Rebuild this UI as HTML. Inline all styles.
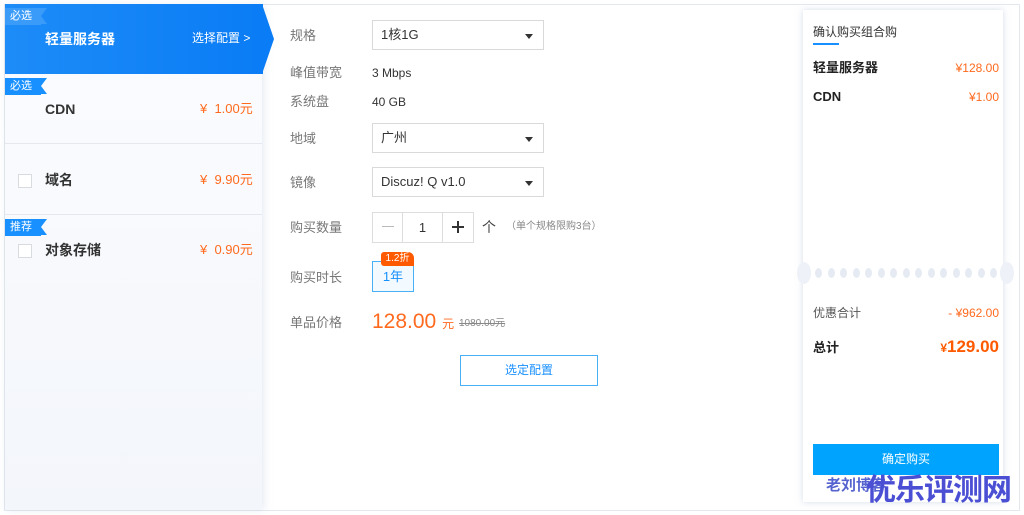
<!DOCTYPE html>
<html><head><meta charset="utf-8"><style>
*{margin:0;padding:0;box-sizing:border-box}
body{width:1024px;height:515px;background:#fff;font-family:"Liberation Sans","Noto Sans CJK SC",sans-serif;position:relative;overflow:hidden;color:#333;line-height:1.2}
.abs{position:absolute}
.outer{left:4px;top:4px;width:1016px;height:507px;border:1px solid #e3e8ef}
.left{left:5px;top:5px;width:257px;height:505px;background:linear-gradient(#fbfcfe,#f3f6fb);box-shadow:2px 0 8px rgba(180,195,215,.35)}
.tab{left:5px;top:4px;width:258px;height:70px;background:linear-gradient(90deg,#1d8cf8,#0a7cf5)}
.tri{left:262px;top:4px;width:0;height:0;border-top:35px solid transparent;border-bottom:35px solid transparent;border-left:12px solid #0a7cf5}
.badge{height:17px;line-height:17px;font-size:11px;color:#fff;background:#1890ff;padding-left:5px;width:36px}
.badge:after{content:"";position:absolute;right:-6px;top:0;border-top:8.5px solid #1890ff;border-bottom:8.5px solid #1890ff;border-right:6px solid transparent}
.b0{background:#3a9cf8}.b0:after{border-top-color:#3a9cf8;border-bottom-color:#3a9cf8}
.row{left:5px;width:257px;height:70px;border-bottom:1px solid #e4e8ee}
.nm{font-size:14px;font-weight:bold;color:#333}
.pr{font-size:13px;color:#ff6a1e}
.cb{width:14px;height:14px;border:1px solid #d8dbe0;background:#fff}
.lbl{left:290px;font-size:13px;color:#777}
.sel{left:372px;width:172px;height:30px;border:1px solid #d9d9d9;font-size:13px;color:#333;padding:6px 8px}
.sel:after{content:"";position:absolute;right:10px;top:13px;border-left:4px solid transparent;border-right:4px solid transparent;border-top:5px solid #333}
.val{left:372px;font-size:12px;color:#333}
.card{left:803px;top:10px;width:200px;height:492px;background:#fff;box-shadow:0 0 6px rgba(170,185,210,.5)}
.dot{width:7px;height:10px;border-radius:50%;background:#e6ebf3;top:268px}
</style></head><body>
<div class="abs outer"></div>
<div class="abs left"></div>
<div class="abs tab"></div>
<div class="abs tri"></div>
<div class="abs badge b0" style="left:5px;top:8px">必选</div>
<div class="abs" style="left:45px;top:31px;font-size:14px;font-weight:bold;color:#fff">轻量服务器</div>
<div class="abs" style="left:192px;top:31px;font-size:12px;color:#fff">选择配置 &gt;</div>

<div class="abs row" style="top:74px"></div>
<div class="abs badge" style="left:5px;top:78px">必选</div>
<div class="abs nm" style="left:45px;top:101px">CDN</div>
<div class="abs pr" style="left:200px;top:101px">¥&nbsp; 1.00元</div>

<div class="abs row" style="top:145px"></div>
<div class="abs cb" style="left:18px;top:174px"></div>
<div class="abs nm" style="left:45px;top:172px">域名</div>
<div class="abs pr" style="left:200px;top:172px">¥&nbsp; 9.90元</div>

<div class="abs row" style="top:215px;border:none"></div>
<div class="abs badge" style="left:5px;top:219px">推荐</div>
<div class="abs cb" style="left:18px;top:244px"></div>
<div class="abs nm" style="left:45px;top:242px">对象存储</div>
<div class="abs pr" style="left:200px;top:242px">¥&nbsp; 0.90元</div>

<div class="abs lbl" style="top:28px">规格</div>
<div class="abs sel" style="top:20px">1核1G</div>
<div class="abs lbl" style="top:65px">峰值带宽</div>
<div class="abs val" style="top:66px">3 Mbps</div>
<div class="abs lbl" style="top:94px">系统盘</div>
<div class="abs val" style="top:95px">40 GB</div>
<div class="abs lbl" style="top:131px">地域</div>
<div class="abs sel" style="top:123px">广州</div>
<div class="abs lbl" style="top:175px">镜像</div>
<div class="abs sel" style="top:167px">Discuz! Q v1.0</div>
<div class="abs lbl" style="top:220px">购买数量</div>
<div class="abs" style="left:372px;top:212px;width:102px;height:31px;border:1px solid #ddd"></div>
<div class="abs" style="left:402px;top:212px;width:41px;height:31px;border-left:1px solid #ddd;border-right:1px solid #ddd;text-align:center;font-size:13px;padding-top:8px">1</div>
<div class="abs" style="left:382px;top:226px;width:12px;height:1px;background:#bbb"></div>
<div class="abs" style="left:452px;top:226px;width:12px;height:2px;background:#333"></div>
<div class="abs" style="left:457px;top:221px;width:2px;height:12px;background:#333"></div>
<div class="abs" style="left:482px;top:219px;font-size:14px;color:#444">个</div>
<div class="abs" style="left:506px;top:221px;font-size:10px;color:#888">（单个规格限购3台）</div>
<div class="abs lbl" style="top:270px">购买时长</div>
<div class="abs" style="left:372px;top:261px;width:42px;height:31px;border:1px solid #4ab0f5;background:#f2f9ff;color:#1890ff;font-size:13px;text-align:center;padding-top:7px">1年</div>
<div class="abs" style="left:381px;top:252px;width:33px;height:14px;background:#ff5a00;color:#fff;font-size:10px;text-align:center;line-height:14px;border-radius:3px 6px 0 3px">1.2折</div>
<div class="abs lbl" style="top:315px">单品价格</div>
<div class="abs" style="left:372px;top:309px;font-size:21px;color:#ff6a1e">128.00 <span style="font-size:12px">元</span></div>
<div class="abs" style="left:459px;top:318px;font-size:10px;color:#888;text-decoration:line-through">1080.00元</div>
<div class="abs" style="left:460px;top:355px;width:138px;height:31px;border:1px solid #4ab0f5;color:#1890ff;font-size:12px;text-align:center;line-height:29px">选定配置</div>

<div class="abs card"></div>
<div class="abs" style="left:813px;top:25px;font-size:12px;color:#333">确认购买组合购</div>
<div class="abs" style="left:813px;top:43px;width:26px;height:2px;background:#1890ff"></div>
<div class="abs" style="left:813px;top:60px;font-size:13px;font-weight:bold;color:#222">轻量服务器</div>
<div class="abs" style="right:25px;top:61px;font-size:12px;color:#ff6a1e">¥128.00</div>
<div class="abs" style="left:813px;top:89px;font-size:13px;font-weight:bold;color:#222">CDN</div>
<div class="abs" style="right:25px;top:90px;font-size:12px;color:#ff6a1e">¥1.00</div>
<div class="abs" style="left:797px;top:262px;width:14px;height:22px;border-radius:50%;background:#eef2f8"></div>
<div class="abs" style="left:1000px;top:262px;width:14px;height:22px;border-radius:50%;background:#eef2f8"></div>
<div class="abs dot" style="left:815px"></div><div class="abs dot" style="left:827.5px"></div><div class="abs dot" style="left:840px"></div><div class="abs dot" style="left:852.5px"></div><div class="abs dot" style="left:865px"></div><div class="abs dot" style="left:877.5px"></div><div class="abs dot" style="left:890px"></div><div class="abs dot" style="left:902.5px"></div><div class="abs dot" style="left:915px"></div><div class="abs dot" style="left:927.5px"></div><div class="abs dot" style="left:940px"></div><div class="abs dot" style="left:952.5px"></div><div class="abs dot" style="left:965px"></div><div class="abs dot" style="left:977.5px"></div><div class="abs dot" style="left:990px"></div>
<div class="abs" style="left:813px;top:306px;font-size:12px;color:#555">优惠合计</div>
<div class="abs" style="right:25px;top:306px;font-size:12px;color:#ff6a1e">- ¥962.00</div>
<div class="abs" style="left:813px;top:340px;font-size:13px;font-weight:bold;color:#222">总计</div>
<div class="abs" style="right:25px;top:337px;font-size:17px;font-weight:bold;color:#ff5a00"><span style="font-size:12px">¥</span>129.00</div>
<div class="abs" style="left:813px;top:444px;width:186px;height:31px;background:#00a4ff;color:#fff;font-size:12px;text-align:center;line-height:31px">确定购买</div>
<div class="abs" style="left:826px;top:477px;font-size:15px;font-weight:bold;color:#5563d0">老刘博客</div>
<div class="abs" style="left:866px;top:473px;font-size:30px;font-weight:bold;color:#4a4fd4;letter-spacing:-1px">优乐评测网</div>
</body></html>
